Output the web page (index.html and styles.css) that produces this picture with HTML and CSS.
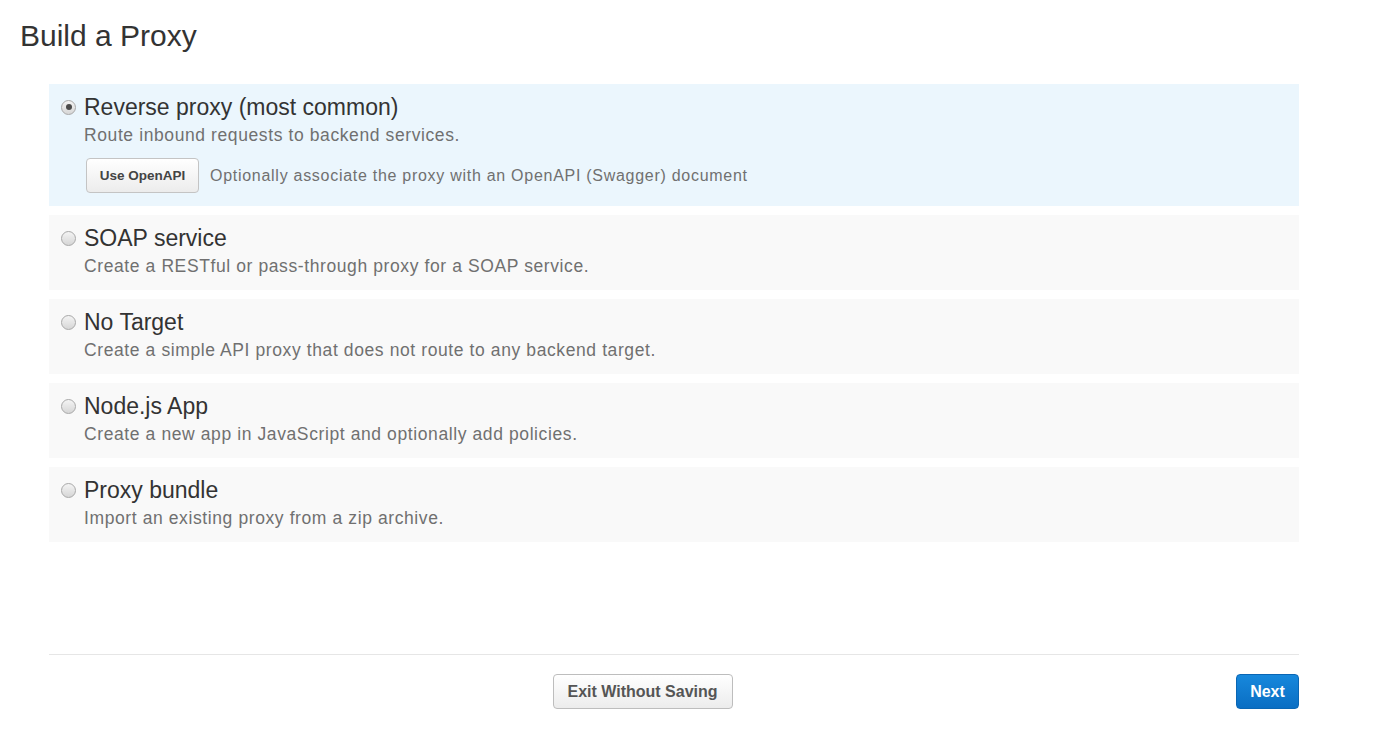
FILE: index.html
```html
<!DOCTYPE html>
<html>
<head>
<meta charset="utf-8">
<title>Build a Proxy</title>
<link rel="stylesheet" href="styles.css">
</head>
<body>
<div class="page">
  <h1 class="heading">Build a Proxy</h1>
  <div class="options">
    <div class="option selected">
      <div class="option-head">
        <span class="radio checked"></span>
        <span class="option-title">Reverse proxy (most common)</span>
      </div>
      <div class="option-desc">Route inbound requests to backend services.</div>
      <div class="openapi-row">
        <button class="btn-small">Use OpenAPI</button>
        <span class="openapi-note">Optionally associate the proxy with an OpenAPI (Swagger) document</span>
      </div>
    </div>
    <div class="option">
      <div class="option-head">
        <span class="radio"></span>
        <span class="option-title">SOAP service</span>
      </div>
      <div class="option-desc">Create a RESTful or pass-through proxy for a SOAP service.</div>
    </div>
    <div class="option">
      <div class="option-head">
        <span class="radio"></span>
        <span class="option-title">No Target</span>
      </div>
      <div class="option-desc">Create a simple API proxy that does not route to any backend target.</div>
    </div>
    <div class="option">
      <div class="option-head">
        <span class="radio"></span>
        <span class="option-title">Node.js App</span>
      </div>
      <div class="option-desc">Create a new app in JavaScript and optionally add policies.</div>
    </div>
    <div class="option">
      <div class="option-head">
        <span class="radio"></span>
        <span class="option-title">Proxy bundle</span>
      </div>
      <div class="option-desc">Import an existing proxy from a zip archive.</div>
    </div>
  </div>
  <div class="footer">
    <span class="footer-spacer"></span>
    <button class="btn btn-default">Exit Without Saving</button>
    <button class="btn btn-primary">Next</button>
  </div>
</div>
</body>
</html>
```
FILE: styles.css
```css
* { box-sizing: border-box; }
html, body {
  margin: 0;
  padding: 0;
  background: #ffffff;
  font-family: "Liberation Sans", Arial, sans-serif;
  color: #333333;
}
.page {
  padding: 18px 0 0 20px;
}
.heading {
  margin: 0;
  font-size: 30px;
  line-height: 36px;
  font-weight: normal;
  color: #333333;
}
.options {
  margin: 30px 0 0 29px;
  width: 1250px;
  display: flex;
  flex-direction: column;
  gap: 9px;
}
.option {
  background: #f9f9f9;
  padding: 9px 12px 13px 12px;
}
.option.selected {
  background: #ebf6fd;
}
.option-head {
  display: flex;
  align-items: center;
  gap: 8px;
  height: 28px;
}
.radio {
  width: 15px;
  height: 15px;
  border-radius: 50%;
  border: 1px solid #a8a8a8;
  background: linear-gradient(#f4f4f4, #d6d6d6);
  display: flex;
  align-items: center;
  justify-content: center;
  flex: none;
}
.radio.checked::after {
  content: "";
  width: 6px;
  height: 6px;
  border-radius: 50%;
  background: #4a4a4a;
}
.option-title {
  font-size: 23px;
  line-height: 28px;
  color: #333333;
}
.option-desc {
  margin: 3px 0 0 23px;
  font-size: 17.5px;
  line-height: 22px;
  letter-spacing: 0.6px;
  color: #707070;
}
.openapi-row {
  margin: 12px 0 0 25px;
  display: flex;
  align-items: center;
}
.btn-small {
  height: 35px;
  width: 113px;
  padding: 0;
  font-family: "Liberation Sans", Arial, sans-serif;
  font-size: 13.5px;
  font-weight: bold;
  color: #444444;
  background: linear-gradient(#ffffff, #ececec);
  border: 1px solid #c4c4c4;
  border-radius: 4px;
}
.openapi-note {
  margin-left: 11px;
  font-size: 16px;
  letter-spacing: 0.72px;
  color: #707070;
}
.footer {
  margin: 112px 0 0 29px;
  width: 1250px;
  border-top: 1px solid #e6e6e6;
  padding-top: 19px;
  display: flex;
  justify-content: space-between;
  align-items: center;
}
.footer-spacer {
  width: 0;
}
.btn {
  height: 35px;
  font-family: "Liberation Sans", Arial, sans-serif;
  font-size: 16px;
  font-weight: bold;
  border-radius: 4px;
  padding: 0;
}
.btn-default {
  width: 180px;
  color: #555555;
  background: linear-gradient(#ffffff, #ececec);
  border: 1px solid #bdbdbd;
}
.btn-primary {
  width: 63px;
  color: #ffffff;
  background: linear-gradient(#1788dc, #0a6ec3);
  border: 1px solid #0a66b4;
}
```
